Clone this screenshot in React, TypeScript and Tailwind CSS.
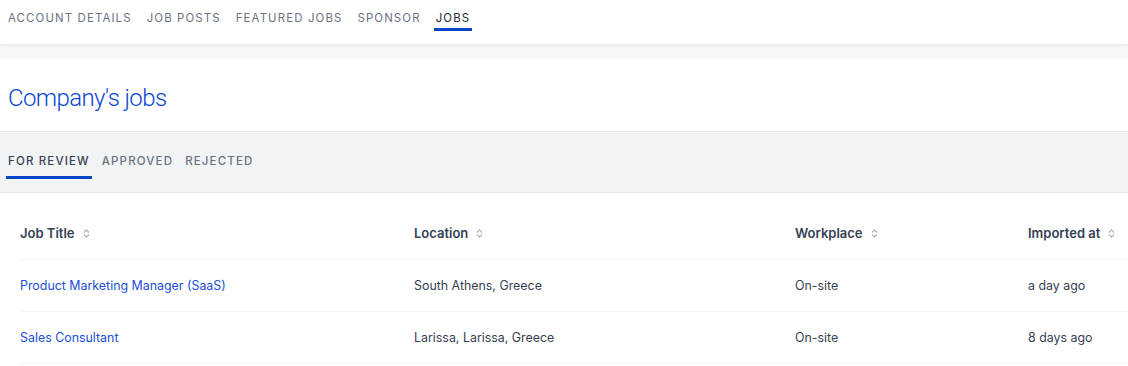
const navTabs = ["Account Details", "Job Posts", "Featured Jobs", "Sponsor", "Jobs"];
const reviewTabs = ["For Review", "Approved", "Rejected"];

const jobs = [
  {
    title: "Product Marketing Manager (SaaS)",
    location: "South Athens, Greece",
    workplace: "On-site",
    imported: "a day ago",
  },
  {
    title: "Sales Consultant",
    location: "Larissa, Larissa, Greece",
    workplace: "On-site",
    imported: "8 days ago",
  },
];

const SortIcon = () => (
  <svg viewBox="0 0 8 10" className="ml-2 h-[9px] w-[7px] text-gray-400" fill="none" stroke="currentColor" strokeWidth="1.2" strokeLinecap="round" strokeLinejoin="round">
    <path d="M1.5 3.5 4 1l2.5 2.5M1.5 6.5 4 9l2.5-2.5" />
  </svg>
);

const cols = "grid grid-cols-[394px_381px_233px_1fr] items-center";

const App = () => (
  <div className="min-h-[366px] bg-white font-['Inter',sans-serif] text-gray-700">
    <nav className="relative z-10 flex h-[44px] items-start gap-[11px] bg-white px-[6px] pt-[11px] shadow-[0_1px_4px_rgba(0,0,0,0.08)]">
      {navTabs.map((tab) => (
        <a
          key={tab}
          href="#"
          className={`border-b-[3px] px-[2px] pb-[3px] text-[11.4px] uppercase leading-[14px] tracking-[0.1em] ${
            tab === "Jobs" ? "border-[#0b46c9] text-gray-800" : "border-transparent text-gray-500"
          }`}
        >
          {tab}
        </a>
      ))}
    </nav>
    <div className="h-[15px] bg-[#f7f7f7]" />

    <h1 className="px-2 pb-[17px] pt-[24px] font-['Roboto',sans-serif] text-[24px] font-light leading-[31px] tracking-[-0.025em] text-[#0b46d1]">
      Company's jobs
    </h1>

    <div className="flex h-[62px] items-start gap-[8px] border-y border-gray-200 bg-[#f2f3f5] px-[6px] pt-[22px]">
      {reviewTabs.map((tab, i) => (
        <a
          key={tab}
          href="#"
          className={`border-b-[3px] px-[2px] pb-[8px] text-[11.5px] font-medium uppercase leading-[14px] tracking-[0.1em] ${
            i === 0 ? "border-[#0b46c9] text-gray-700" : "border-transparent text-gray-500"
          }`}
        >
          {tab}
        </a>
      ))}
    </div>

    <div className="pl-5 pt-[15px] text-[12.4px]">
      <div className={`${cols} h-[52px] border-b border-gray-100 text-[13px] font-semibold text-gray-700`}>
        {["Job Title", "Location", "Workplace", "Imported at"].map((h) => (
          <div key={h} className="flex items-center">
            {h}
            <SortIcon />
          </div>
        ))}
      </div>
      {jobs.map((job) => (
        <div key={job.title} className={`${cols} h-[52px] border-b border-gray-100 pt-[2px]`}>
          <a href="#" className="text-[#1a4fd6]">
            {job.title}
          </a>
          <div>{job.location}</div>
          <div>{job.workplace}</div>
          <div>{job.imported}</div>
        </div>
      ))}
    </div>
  </div>
);

export default App;
